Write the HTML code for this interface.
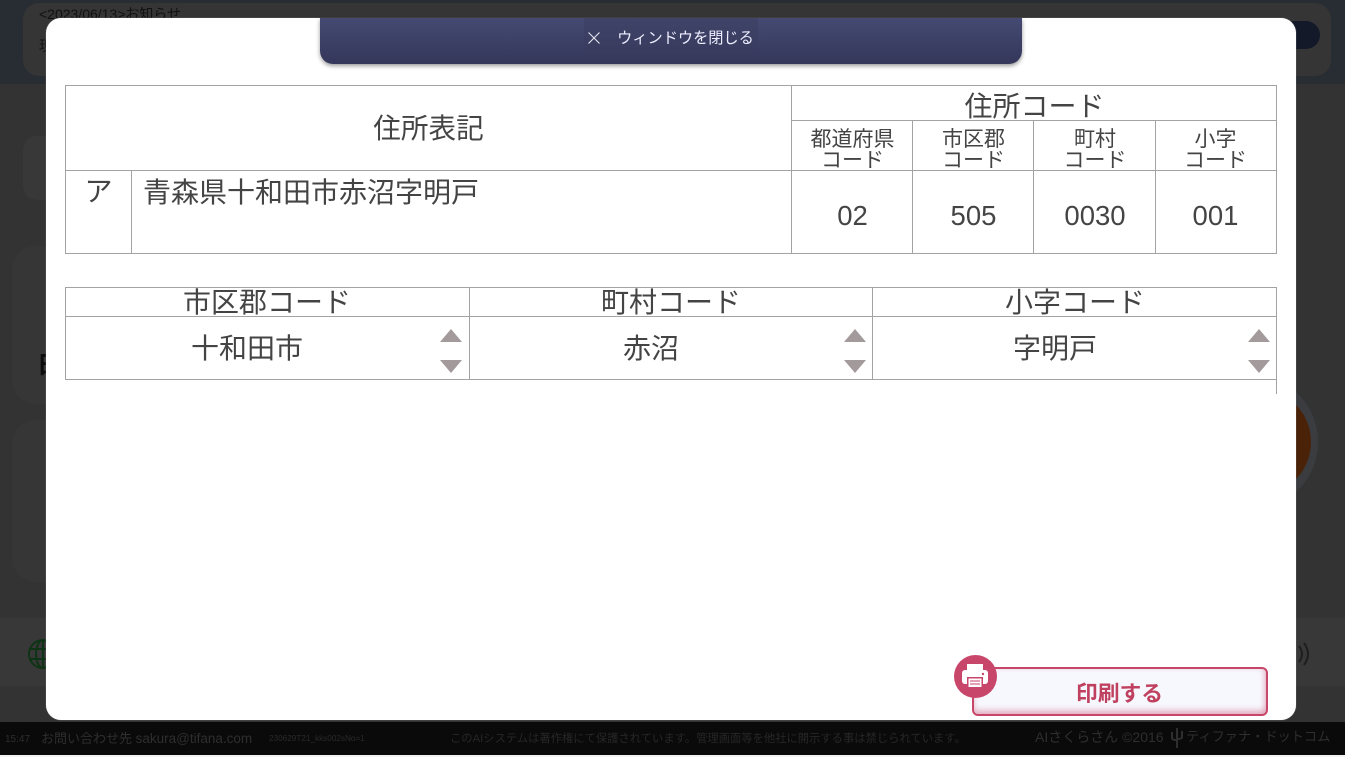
<!DOCTYPE html>
<html lang="ja"><head><meta charset="utf-8"><style>
*{box-sizing:border-box}
html,body{margin:0;padding:0;width:1345px;height:757px;overflow:hidden;background:#f2f2f2;font-family:"Liberation Sans","Noto Sans CJK JP",sans-serif}
.a{position:absolute}
.t{position:absolute;white-space:nowrap;text-align:center;color:#444;font-family:"Liberation Sans","Noto Sans CJK JP",sans-serif;font-size:28px;line-height:32px}
.h{position:absolute;height:1px;background:#a3a3a3}
.v{position:absolute;width:1px;background:#a3a3a3}
.up,.dn{position:absolute;width:0;height:0;border-left:11px solid transparent;border-right:11px solid transparent}
.up{border-bottom:13px solid #a39a9c}
.dn{border-top:13px solid #a39a9c}
</style></head><body>
<div class="a" style="left:0;top:0;width:1345px;height:755px;background:#333;overflow:hidden">
<div class="a" style="left:0;top:0;width:1345px;height:84px;background:#282c33"></div>
<div class="a" style="left:23px;top:3px;width:1308px;height:73px;border-radius:16px;background:#353535"></div>
<div class="a" style="left:39px;top:4px;color:#111;font-size:14px;line-height:20px;white-space:nowrap">&lt;2023/06/13&gt;お知らせ</div>
<div class="a" style="left:39px;top:36px;color:#111;font-size:14px;line-height:20px">現</div>
<div class="a" style="left:1280px;top:21px;width:40px;height:28px;border-radius:14px;background:#14192a"></div>
<div class="a" style="left:23px;top:136px;width:60px;height:64px;border-radius:14px;background:#383838"></div>
<div class="a" style="left:12px;top:246px;width:60px;height:158px;border-radius:24px;background:#363636"></div>
<div class="a" style="left:12px;top:420px;width:60px;height:162px;border-radius:24px;background:#363636"></div>
<div class="a" style="left:37px;top:352px;color:#0c0c0c;font-size:24px;font-weight:bold;line-height:28px">日</div>
<div class="a" style="left:1200px;top:378px;width:118px;height:128px;border-radius:50%;background:#3a3c40"></div>
<div class="a" style="left:1211px;top:390px;width:100px;height:104px;border-radius:50%;background:#4a2208"></div>
<div class="a" style="left:0;top:618px;width:1345px;height:68px;background:#383838"></div>
<svg class="a" style="left:28px;top:638px" width="30" height="32" viewBox="0 0 30 32" fill="none" stroke="#0f3315" stroke-width="2"><circle cx="15" cy="16" r="14"/><ellipse cx="15" cy="16" rx="7" ry="14"/><path d="M15 2V30M2 11H28M2 21H28"/></svg>
<svg class="a" style="left:1296px;top:640px" width="18" height="28" viewBox="0 0 18 28" fill="none" stroke="#1e1e1e" stroke-width="2"><path d="M3 6Q9 14 3 22M8 3Q16 14 8 25"/></svg>
<div class="a" style="left:0;top:722px;width:1345px;height:33px;background:#0a0a0b"></div>
<div class="a" style="left:5px;top:733px;font-size:10px;line-height:14px;color:#2e2e2e;white-space:nowrap">15:47</div>
<div class="a" style="left:41px;top:730px;font-size:13px;line-height:18px;color:#2e2e2e;white-space:nowrap">お問い合わせ先 <span style="font-size:13.500px">sakura@tifana.com</span></div>
<div class="a" style="left:269px;top:733px;font-size:8.200px;line-height:12px;color:#2a2a2a;white-space:nowrap">230629T21_kks002sNo=1</div>
<div class="a" style="left:450px;top:731px;font-size:11.300px;line-height:16px;color:#272727;white-space:nowrap">このAIシステムは著作権にて保護されています。管理画面等を他社に開示する事は禁じられています。</div>
<div class="a" style="left:1035px;top:728px;font-size:14px;line-height:18px;color:#2e2e2e;white-space:nowrap">AIさくらさん ©2016</div>
<svg class="a" style="left:1170px;top:727px" width="14" height="22" viewBox="0 0 14 22" fill="none" stroke="#2e2e2e" stroke-width="2"><path d="M7 1V21M2 5V11Q2 13 7 13M12 4V10Q12 12 7 12"/></svg>
<div class="a" style="left:1186px;top:728px;font-size:13.200px;line-height:18px;color:#2e2e2e;white-space:nowrap">ティファナ・ドットコム</div>
</div>
<div class="a" style="left:46px;top:18px;width:1250px;height:702px;background:#fff;border-radius:15px;box-shadow:0 0 1px #999"></div>
<div class="a" style="left:320px;top:18px;width:702px;height:46px;border-radius:0 0 13px 13px;background:linear-gradient(#444a72,#34375a);box-shadow:0 2px 4px rgba(0,0,0,.4)"></div>
<div class="a" style="left:584px;top:18px;width:174px;height:36px;background:linear-gradient(#3f4468,#383b5e)"></div>
<svg class="a" style="left:587px;top:31px" width="14" height="14" viewBox="0 0 14 14" stroke="#e6e6ee" stroke-width="1.1"><path d="M1.500 1.500L12.500 12.500M12.500 1.500L1.500 12.500"/></svg>
<div class="t" style="left:617px;top:27px;width:137px;font-size:15.200px;line-height:20px;color:#eef;font-family:'Noto Sans CJK JP',sans-serif">ウィンドウを閉じる</div>

<!-- table 1 -->
<div class="h" style="left:65px;top:85px;width:1212px"></div>
<div class="h" style="left:792px;top:120px;width:485px"></div>
<div class="h" style="left:65px;top:170px;width:1212px"></div>
<div class="h" style="left:65px;top:253px;width:1212px"></div>
<div class="v" style="left:65px;top:85px;height:169px"></div>
<div class="v" style="left:131px;top:170px;height:84px"></div>
<div class="v" style="left:791px;top:85px;height:169px"></div>
<div class="v" style="left:912px;top:120px;height:134px"></div>
<div class="v" style="left:1033px;top:120px;height:134px"></div>
<div class="v" style="left:1155px;top:120px;height:134px"></div>
<div class="v" style="left:1276px;top:85px;height:169px"></div>
<div class="t" style="left:65px;top:113px;width:727px;font-size:27.600px">住所表記</div>
<div class="t" style="left:792px;top:91px;width:485px">住所コード</div>
<div class="t" style="left:792px;top:129px;width:121px;font-size:21px;line-height:21px">都道府県<br>コード</div>
<div class="t" style="left:913px;top:129px;width:121px;font-size:21px;line-height:21px">市区郡<br>コード</div>
<div class="t" style="left:1034px;top:129px;width:122px;font-size:21px;line-height:21px">町村<br>コード</div>
<div class="t" style="left:1155px;top:129px;width:121px;font-size:21px;line-height:21px">小字<br>コード</div>
<div class="t" style="left:66px;top:176px;width:65px">ア</div>
<div class="t" style="left:143px;top:177px;text-align:left">青森県十和田市赤沼字明戸</div>
<div class="t" style="left:792px;top:200px;width:121px;font-size:27.500px">02</div>
<div class="t" style="left:913px;top:200px;width:121px;font-size:27.500px">505</div>
<div class="t" style="left:1034px;top:200px;width:122px;font-size:27.500px">0030</div>
<div class="t" style="left:1155px;top:200px;width:121px;font-size:27.500px">001</div>

<!-- table 2 -->
<div class="h" style="left:65px;top:287px;width:1212px"></div>
<div class="h" style="left:65px;top:316px;width:1212px"></div>
<div class="h" style="left:65px;top:379px;width:1212px"></div>
<div class="v" style="left:65px;top:287px;height:93px"></div>
<div class="v" style="left:469px;top:287px;height:93px"></div>
<div class="v" style="left:872px;top:287px;height:93px"></div>
<div class="v" style="left:1276px;top:287px;height:107px"></div>
<div class="t" style="left:65px;top:287px;width:404px">市区郡コード</div>
<div class="t" style="left:469px;top:287px;width:404px">町村コード</div>
<div class="t" style="left:873px;top:287px;width:404px">小字コード</div>
<div class="t" style="left:65px;top:333px;width:364px">十和田市</div>
<div class="t" style="left:469px;top:333px;width:364px">赤沼</div>
<div class="t" style="left:873px;top:333px;width:364px">字明戸</div>
<div class="up" style="left:440px;top:329px"></div><div class="dn" style="left:440px;top:360px"></div>
<div class="up" style="left:844px;top:329px"></div><div class="dn" style="left:844px;top:360px"></div>
<div class="up" style="left:1248px;top:329px"></div><div class="dn" style="left:1248px;top:360px"></div>

<!-- print button -->
<div class="a" style="left:972px;top:667px;width:296px;height:49px;border:2px solid #c8466a;border-radius:6px;background:#f7f8fd;box-shadow:inset 0 -4px 6px rgba(200,70,106,.35),inset -3px 0 5px rgba(200,70,106,.15)"></div>
<div class="t" style="left:1070px;top:679px;width:99px;font-size:21.800px;line-height:28px;font-weight:bold;color:#c0415f;font-family:'Noto Sans CJK JP',sans-serif">印刷する</div>
<div class="a" style="left:954px;top:655px;width:43px;height:43px;border-radius:50%;background:#c8466a"></div>
<svg class="a" style="left:960px;top:662px" width="30" height="30" viewBox="0 0 30 30"><rect x="7" y="2" width="16" height="8" fill="#fff"/><rect x="2" y="8" width="26" height="14" rx="3" fill="#fff"/><circle cx="23" cy="12" r="1.2" fill="#c8466a"/><rect x="7" y="15" width="16" height="11" fill="#c8466a"/><rect x="8.500" y="16.500" width="13" height="8.500" fill="#fff"/><path d="M10 19H20M10 22H20" stroke="#c8466a" stroke-width="1"/></svg>
</body></html>
